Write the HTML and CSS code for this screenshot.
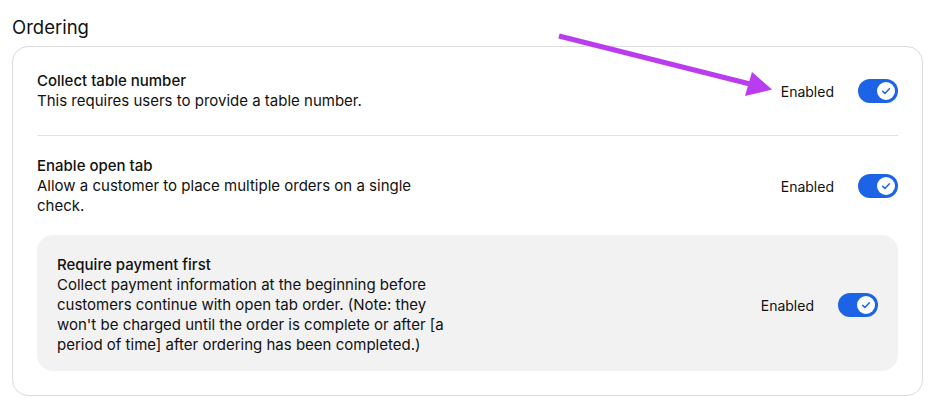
FILE: index.html
```html
<!DOCTYPE html>
<html lang="en">
<head>
  <meta charset="UTF-8" />
  <title>Ordering settings</title>
  <link rel="stylesheet" href="styles.css">
</head>
<body>

  <div class="page">
    <h2 class="section-title">Ordering</h2>

    <div class="settings-card">
      <div class="setting-row divided">
        <div class="setting-text">
          <div class="setting-name">Collect table number</div>
          <div class="setting-desc">This requires users to provide a table number.</div>
        </div>
        <div class="setting-control">
          <span class="state">Enabled</span>
          <span class="toggle"><span class="knob"><svg viewBox="0 0 18 18" width="18" height="18"><path d="M5.6 9.2 L7.9 11.4 L12.4 6.8" /></svg></span></span>
        </div>
      </div>

      <div class="setting-row">
        <div class="setting-text">
          <div class="setting-name">Enable open tab</div>
          <div class="setting-desc">Allow a customer to place multiple orders on a single check.</div>
        </div>
        <div class="setting-control">
          <span class="state">Enabled</span>
          <span class="toggle"><span class="knob"><svg viewBox="0 0 18 18" width="18" height="18"><path d="M5.6 9.2 L7.9 11.4 L12.4 6.8" /></svg></span></span>
        </div>
      </div>

      <div class="sub-setting">
        <div class="setting-text">
          <div class="setting-name">Require payment first</div>
          <div class="setting-desc">Collect payment information at the beginning before customers continue with open tab order. (Note: they won't be charged until the order is complete or after [a period of time] after ordering has been completed.)</div>
        </div>
        <div class="setting-control">
          <span class="state">Enabled</span>
          <span class="toggle"><span class="knob"><svg viewBox="0 0 18 18" width="18" height="18"><path d="M5.6 9.2 L7.9 11.4 L12.4 6.8" /></svg></span></span>
        </div>
      </div>
    </div>
  </div>

  <!-- annotation arrow drawn over the screenshot -->
  <svg class="annotation" width="937" height="418" viewBox="0 0 937 418">
    <line x1="559" y1="36" x2="750" y2="84" />
    <polygon points="752,72 772,89.5 745,96" />
  </svg>

</body>
</html>
```

FILE: styles.css
```css
body {
  font-family: Inter, "Noto Sans", sans-serif;
  background: #fff;
  margin: 0;
  padding: 0;
  color: #111;
}

.page {
  padding: 15px 14px 0 12px;
}

.section-title {
  font-size: 18.5px;
  font-weight: 400;
  line-height: 24px;
  margin: 0 0 7px;
}

.settings-card {
  border: 1px solid #dcdcdc;
  border-radius: 16px;
  padding: 24px;
}

.setting-row {
  display: flex;
  justify-content: space-between;
  align-items: center;
  padding: 20px 0 19px;
}

.setting-row:first-child {
  padding-top: 0;
}

.setting-row.divided {
  padding-bottom: 24px;
  border-bottom: 1px solid #e2e2e2;
}

.setting-text {
  max-width: 400px;
  font-size: 15px;
  line-height: 20px;
}

.setting-name {
  font-weight: 500;
}

.setting-desc {
  font-weight: 400;
}

.sub-setting {
  display: flex;
  justify-content: space-between;
  align-items: center;
  background: #f2f2f2;
  border-radius: 16px;
  padding: 20px 20px 16px;
}

.setting-control {
  display: flex;
  align-items: center;
  gap: 24px;
}

.state {
  font-size: 14px;
}

.toggle {
  display: flex;
  justify-content: flex-end;
  align-items: center;
  width: 40px;
  height: 24px;
  padding: 0 3px;
  box-sizing: border-box;
  background: #1d63e6;
  border-radius: 12px;
}

.knob {
  width: 18px;
  height: 18px;
  border-radius: 50%;
  background: #fff;
  display: flex;
}

.knob path {
  fill: none;
  stroke: #1d63e6;
  stroke-width: 1.5;
  stroke-linecap: round;
  stroke-linejoin: round;
}

.annotation {
  position: absolute;
  left: 0;
  top: 0;
  pointer-events: none;
}

.annotation line {
  stroke: #b93cf0;
  stroke-width: 5;
}

.annotation polygon {
  fill: #b93cf0;
}
```
